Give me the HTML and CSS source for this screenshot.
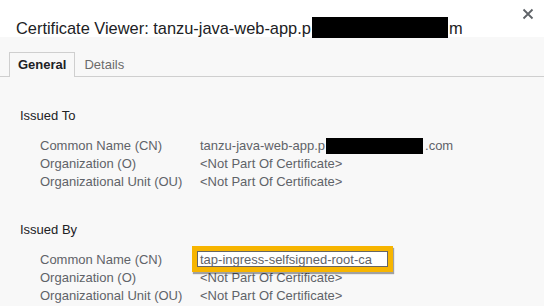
FILE: index.html
```html
<!DOCTYPE html>
<html>
<head>
<meta charset="utf-8">
<link rel="stylesheet" href="styles.css">
</head>
<body>
<div class="dialog">
  <div class="titlebar">
    <div class="title">Certificate Viewer: tanzu-java-web-app.p<span class="redact redact-title"></span>m</div>
    <div class="close">
      <svg width="12" height="12" viewBox="0 0 12 12"><path d="M1.5 1.5 L10.5 10.5 M10.5 1.5 L1.5 10.5" stroke="#5f6368" stroke-width="1.8" fill="none"/></svg>
    </div>
  </div>
  <div class="tabs">
    <div class="tab active">General</div>
    <div class="tab">Details</div>
  </div>
  <div class="content">
    <div class="section">
      <div class="heading">Issued To</div>
      <div class="rows">
        <div class="label">Common Name (CN)</div>
        <div class="value">tanzu-java-web-app.p<span class="redact redact-value"></span>.com</div>
        <div class="label">Organization (O)</div>
        <div class="value">&lt;Not Part Of Certificate&gt;</div>
        <div class="label">Organizational Unit (OU)</div>
        <div class="value">&lt;Not Part Of Certificate&gt;</div>
      </div>
    </div>
    <div class="section">
      <div class="heading">Issued By</div>
      <div class="rows">
        <div class="label">Common Name (CN)</div>
        <div class="value highlighted">tap-ingress-selfsigned-root-ca<span class="hl"></span></div>
        <div class="label">Organization (O)</div>
        <div class="value">&lt;Not Part Of Certificate&gt;</div>
        <div class="label">Organizational Unit (OU)</div>
        <div class="value">&lt;Not Part Of Certificate&gt;</div>
      </div>
    </div>
  </div>
</div>
</body>
</html>
```
FILE: styles.css
```css
html, body {
  margin: 0;
  padding: 0;
}
body {
  font-family: "Liberation Sans", Arial, sans-serif;
  background: #f8f8f8;
}
.dialog {
  width: 544px;
  height: 306px;
  background: #f8f8f8;
  overflow: hidden;
}
.titlebar {
  height: 37px;
  background: #ffffff;
  display: flex;
  justify-content: space-between;
  align-items: flex-start;
  padding-left: 16px;
  padding-right: 10px;
}
.title {
  font-size: 16.4px;
  color: #202124;
  margin-top: 19px;
  line-height: 18px;
  white-space: nowrap;
}
.redact {
  display: inline-block;
  background: #000;
  vertical-align: top;
}
.redact-title {
  width: 136px;
  height: 21px;
  margin-top: -2px;
  margin-left: 1px;
  margin-right: 1px;
}
.close {
  margin-top: 8px;
  width: 12px;
  height: 12px;
}
.close svg {
  display: block;
}
.tabs {
  display: flex;
  padding-left: 9px;
  padding-top: 15px;
  border-bottom: 1px solid #cfcfcf;
  height: 24px;
}
.tab {
  font-size: 13px;
  color: #6b6b6b;
  padding: 0 8px;
  line-height: 23px;
  border: 1px solid transparent;
  border-bottom: none;
}
.tab.active {
  font-weight: bold;
  color: #202124;
  border-color: #cfcfcf;
  background: #f8f8f8;
  margin-bottom: -1px;
  height: 24px;
}
.content {
  padding-left: 20px;
  padding-top: 30px;
}
.section {
  margin-bottom: 30px;
}
.heading {
  font-size: 13px;
  color: #202124;
  line-height: 18px;
  margin-bottom: 12px;
}
.rows {
  display: grid;
  grid-template-columns: 160px auto;
  padding-left: 20px;
  font-size: 13px;
  line-height: 18px;
  color: #5f6368;
}
.value {
  white-space: nowrap;
}
.redact-value {
  width: 97px;
  height: 16px;
  margin-top: 1px;
  margin-left: 1px;
  margin-right: 2px;
}
.highlighted {
  position: relative;
  z-index: 0;
}
.hl {
  position: absolute;
  left: -8px;
  top: -5px;
  width: 191px;
  height: 16px;
  border: 5px solid #f7b500;
  background: #ffffff;
  box-shadow: inset 0 0 0 1px #666, 1px 2px 1px rgba(0,0,0,0.35);
  z-index: -1;
}
```
